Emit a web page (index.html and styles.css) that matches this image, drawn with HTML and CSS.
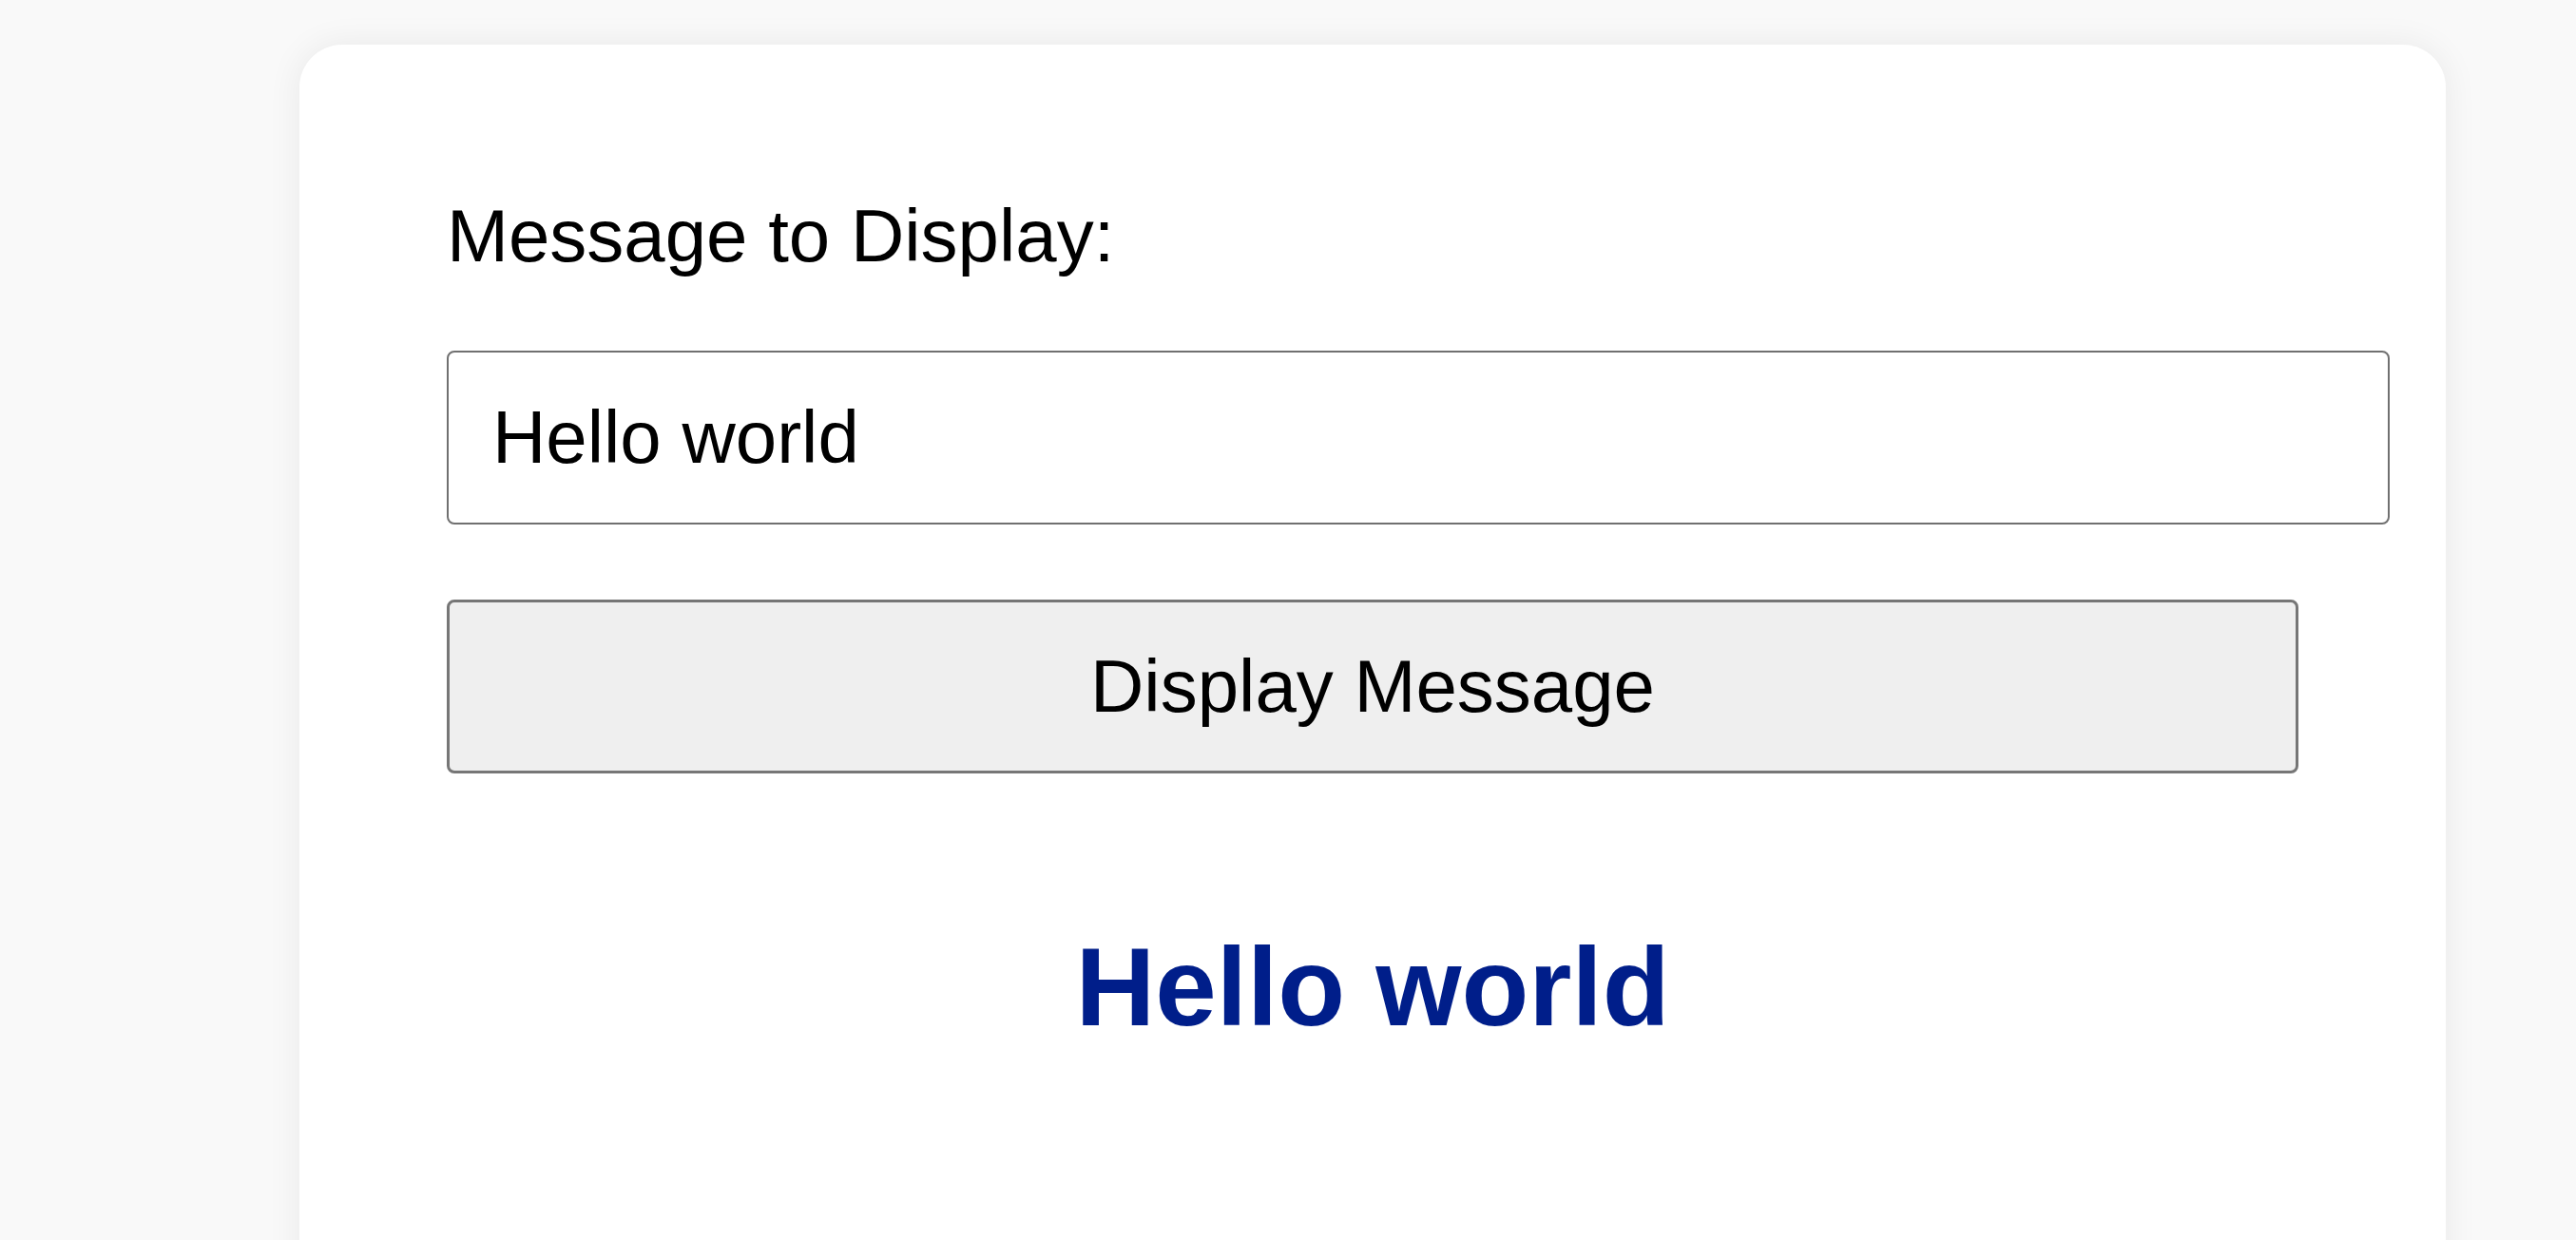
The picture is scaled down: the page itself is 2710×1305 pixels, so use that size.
FILE: index.html
```html
<!DOCTYPE html>
<html lang="en">
<head>
<meta charset="utf-8">
<title>Message Display</title>
<link rel="stylesheet" href="styles.css">
</head>
<body>
<main class="card">
  <label class="field-label" for="msg">Message to Display:</label>
  <input class="field-input" id="msg" type="text" value="Hello world">
  <button class="display-btn" type="button">Display Message</button>
  <div class="output">Hello world</div>
</main>
</body>
</html>
```

FILE: styles.css
```css
html, body {
  margin: 0;
  height: 100%;
  overflow: hidden;
}

body {
  background: #f9f9f9;
  font-family: "Liberation Sans", Arial, sans-serif;
  padding-top: 47px;
  box-sizing: border-box;
}

.card {
  margin-left: 315px;
  width: 2258px;
  box-sizing: border-box;
  padding: 156px 155px 320px;
  background: #ffffff;
  border-radius: 45px;
  box-shadow: 0 0 36px rgba(0, 0, 0, 0.07);
}

.field-label {
  display: block;
  font-size: 78px;
  line-height: normal;
  color: #000;
}

.field-input {
  display: block;
  margin-top: 75px;
  width: 100%;
  box-sizing: content-box;
  padding: 44px 46px;
  border: 2px solid #707070;
  border-radius: 8px;
  font-family: "Liberation Sans", Arial, sans-serif;
  font-size: 78px;
  line-height: normal;
  color: #000;
  background: #fff;
  outline: none;
}

.display-btn {
  display: block;
  margin-top: 79px;
  width: 100%;
  height: 183px;
  box-sizing: border-box;
  padding: 0;
  border: 3px solid #767676;
  border-radius: 8px;
  background: #efefef;
  font-family: "Liberation Sans", Arial, sans-serif;
  font-size: 78px;
  line-height: normal;
  color: #000;
}

.output {
  margin-top: 158px;
  text-align: center;
  font-size: 116px;
  font-weight: bold;
  line-height: normal;
  color: #001e8a;
}
```
